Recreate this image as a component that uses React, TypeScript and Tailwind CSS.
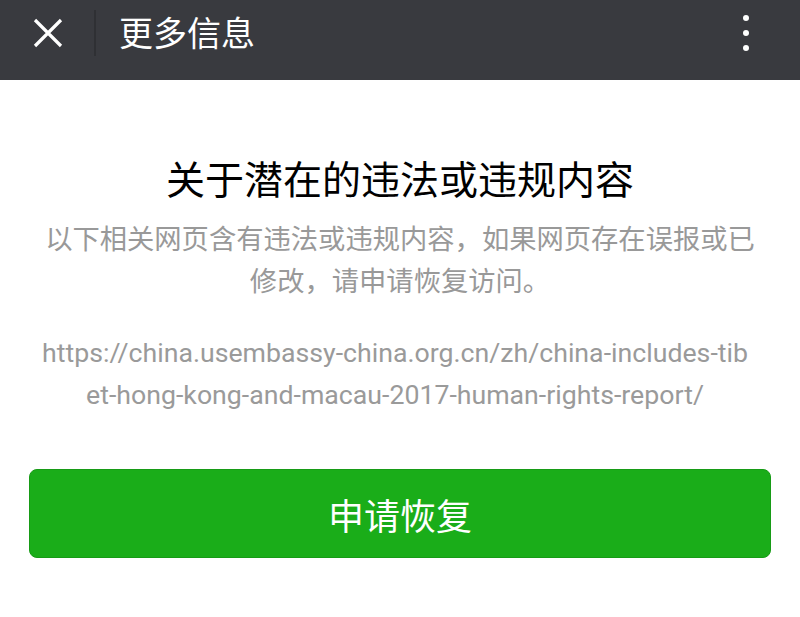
import React from "react";

export default function App() {
  return (
    <div className="w-[800px] h-[617px] bg-white flex flex-col" style={{ fontFamily: '"Noto Sans CJK SC", "Noto Sans", sans-serif' }}>
      <div className="h-[80px] bg-[#393a3f] flex items-center shrink-0 pb-[14px]">
        <div className="w-[94px] flex justify-center items-center pl-[2px]">
          <svg width="30" height="30" viewBox="0 0 30 30">
            <path d="M2 2 L28 28 M28 2 L2 28" stroke="#ffffff" strokeWidth="3.2" strokeLinecap="butt" />
          </svg>
        </div>
        <div className="w-[2px] h-[46px] bg-[#2f3034]" />
        <div className="ml-[23px] text-white text-[34px] leading-none flex-1 pb-[2px]">更多信息</div>
        <div className="w-[52px] flex flex-col items-center gap-[9px] mr-[28px]">
          <div className="w-[6px] h-[6px] rounded-full bg-white" />
          <div className="w-[6px] h-[6px] rounded-full bg-white" />
          <div className="w-[6px] h-[6px] rounded-full bg-white" />
        </div>
      </div>
      <div className="flex flex-col items-center px-[29px]">
        <div className="mt-[73px] text-[39px] leading-[48px] text-black">关于潜在的违法或违规内容</div>
        <div className="mt-[15px] px-[12px] text-[27.3px] leading-[42px] text-[#999999] text-center">
          以下相关网页含有违法或违规内容，如果网页存在误报或已修改，请申请恢复访问。
        </div>
        <div
          className="mt-[32px] pr-[10px] text-[26.7px] leading-[42px] text-[#9a9a9a] text-center flex flex-col items-center"
          style={{ fontFamily: 'Roboto, "Noto Sans", sans-serif' }}
        >
          <span className="whitespace-nowrap">https://china.usembassy-china.org.cn/zh/china-includes-tib</span>
          <span className="whitespace-nowrap">et-hong-kong-and-macau-2017-human-rights-report/</span>
        </div>
        <button className="mt-[53px] w-full h-[89px] rounded-[8px] bg-[#1aad19] border border-[#179b16] text-white text-[36px] flex items-center justify-center">
          申请恢复
        </button>
      </div>
    </div>
  );
}
